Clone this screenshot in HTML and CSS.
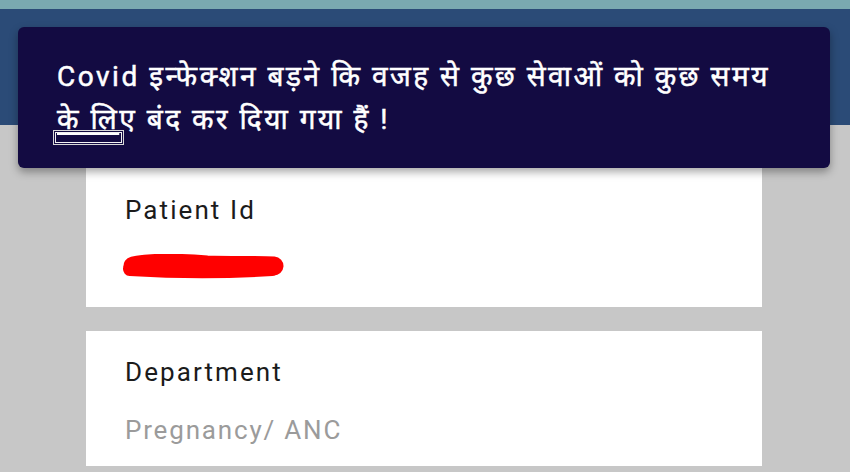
FILE: index.html
```html
<!DOCTYPE html>
<html lang="hi">
  <head>
    <meta charset="UTF-8" />
    <meta name="viewport" content="width=device-width, initial-scale=1.0" />
    <title>Appointment</title>
    <link rel="stylesheet" href="styles.css">
  </head>
  <body>
    <div class="statusbar"></div>
    <header class="appbar"></header>
    <main class="content">
      <section class="card card-first">
        <h3>Patient Id</h3>
        <svg class="redact" width="164" height="26" viewBox="0 0 164 26">
          <path d="M11 12 C 30 8, 60 9, 85 11 C 110 12, 135 11, 152 12" stroke="#ff0000" stroke-width="19" stroke-linecap="round" fill="none" />
          <path d="M8 15 C 40 17, 90 19, 150 15" stroke="#ff0000" stroke-width="14" stroke-linecap="round" fill="none" />
        </svg>
      </section>
      <section class="card">
        <h3>Department</h3>
        <p>Pregnancy/ ANC</p>
      </section>
    </main>
    <div class="toast">
      <p>Covid इन्फेक्शन बड़ने कि वजह से कुछ सेवाओं को कुछ समय<br><span class="link">के लि</span>ए बंद कर दिया गया हैं !</p>
      <span class="focus-box"></span>
    </div>
  </body>
</html>
```

FILE: styles.css
```css
* {
  box-sizing: border-box;
  margin: 0;
  padding: 0;
}

body {
  font-family: Roboto, "Noto Sans", sans-serif;
  background-color: #c7c7c7;
  width: 850px;
  height: 472px;
  overflow: hidden;
  position: relative;
}

.statusbar {
  height: 9px;
  background-color: #7aa9b0;
}

.appbar {
  height: 116px;
  background-color: #2b4b77;
}

.content {
  display: flex;
  flex-direction: column;
  gap: 24px;
  width: 676px;
  margin-left: 86px;
}

.card {
  background-color: #fff;
  padding: 26px 39px 0;
  height: 135px;
}

.card-first {
  height: 182px;
  padding-top: 70px;
}

.card h3 {
  font-weight: 400;
  font-size: 26px;
  letter-spacing: 0.08em;
  line-height: 30px;
  color: #1b1b1b;
}

.card p {
  margin-top: 28px;
  font-size: 26px;
  letter-spacing: 0.07em;
  line-height: 30px;
  color: #9b9b9b;
}

.redact {
  display: block;
  margin-top: 29px;
  margin-left: -3px;
}

.toast {
  position: absolute;
  left: 18px;
  top: 27px;
  width: 812px;
  height: 141px;
  background-color: #130b42;
  border-radius: 6px;
  box-shadow: 0 4px 8px rgba(0, 0, 0, 0.35);
  padding: 28px 20px 0 39px;
}

.toast p {
  color: #fff;
  font-size: 28px;
  font-weight: 400;
  line-height: 43px;
  letter-spacing: 0.09em;
  -webkit-text-stroke: 0.5px #fff;
  white-space: nowrap;
}

.toast .link {
  text-decoration: underline;
  text-decoration-thickness: 2px;
  text-underline-offset: 4px;
}

.focus-box {
  position: absolute;
  left: 35px;
  top: 103px;
  width: 71px;
  height: 15px;
  border: 1px solid #d8d8d8;
  box-shadow: inset 0 0 0 1px #130b42, inset 0 0 0 2px #f2f2f2;
}
```
